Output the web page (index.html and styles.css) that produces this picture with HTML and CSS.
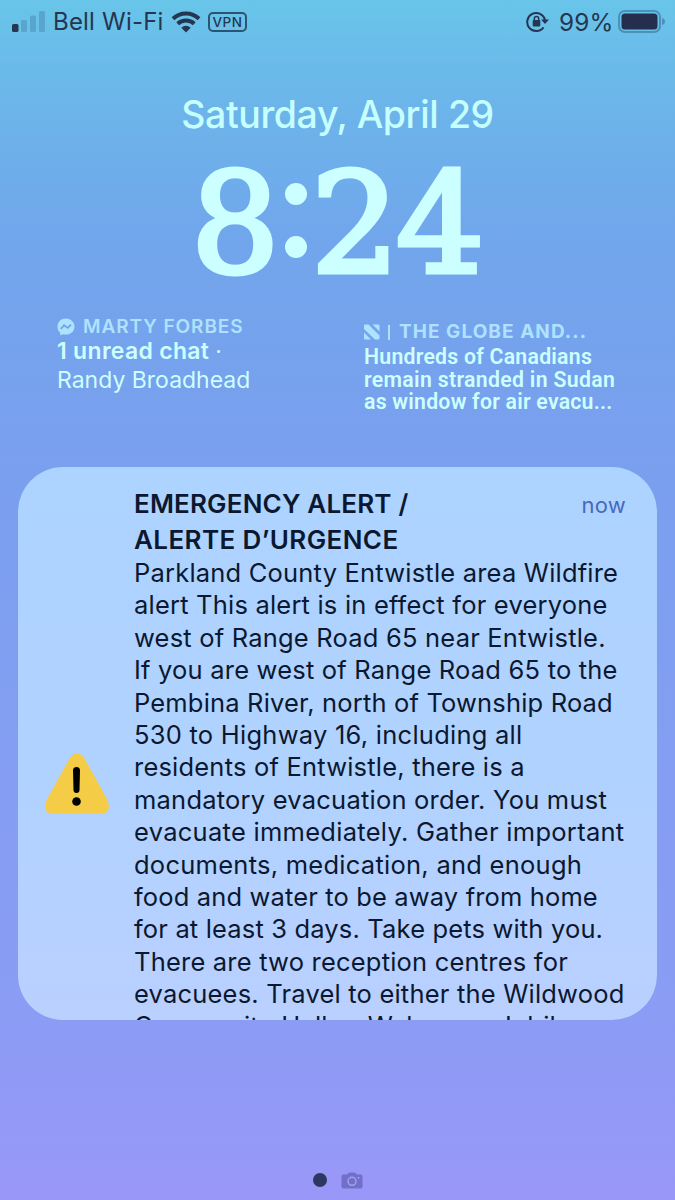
FILE: index.html
```
<!DOCTYPE html>
<html lang="en">
<head>
<meta charset="utf-8">
<title>Lock screen</title>
<link rel="stylesheet" href="styles.css">
</head>
<body>
<main class="screen">
  <header class="status">
    <svg class="signal" width="34" height="21" viewBox="0 0 34 21"><rect x="0" y="13" width="6.5" height="8" rx="1.6" fill="#253650"/><g fill="#58a5cd"><rect x="9" y="9" width="6" height="12" rx="1.6"/><rect x="18" y="4.5" width="6" height="16.5" rx="1.6"/><rect x="27" y="0" width="6" height="21" rx="1.6"/></g></svg>
    <span class="carrier">Bell Wi-Fi</span>
    <svg class="wifi" width="30" height="22" viewBox="0 0 30 22" fill="none" stroke="#253650" stroke-width="4"><path d="M2 7.700C9.200.700 20.800.700 28 7.700"/><path d="M6.700 12.700C11.300 8.400 18.700 8.400 23.300 12.700"/><path d="M15 21.500 10.300 16.700Q15 12.700 19.700 16.700Z" fill="#253650" stroke="none"/></svg>
    <span class="vpn">VPN</span>
    <span class="spacer"></span>
    <svg class="lock" width="23" height="22" viewBox="0 0 23 22" fill="none" stroke="#253650" stroke-width="2"><path d="M17.500 16.300A9 9 0 1 1 19 9"/><path d="M15 8.500H23L19 13Z" fill="#253650" stroke="none"/><rect x="6.700" y="9" width="7.600" height="6.500" rx="1" fill="#253650" stroke="none"/><path d="M8.300 9V7.700a2.200 2.200 0 0 1 4.400 0V9" stroke-width="1.500"/></svg>
    <span class="percent">99%</span>
    <svg class="battery" width="47" height="24" viewBox="0 0 47 24"><rect x="1" y="1" width="41" height="21" rx="6" fill="none" stroke="#4b90b8" stroke-width="2"/><rect x="3.500" y="3.500" width="36" height="16" rx="3.500" fill="#252f4d"/><path d="M44 8q3 1 3 3.500t-3 3.500z" fill="#4b90b8"/></svg>
  </header>

  <div class="date">Saturday, April 29</div>
  <div class="time"><span class="eight">8</span><span class="colon"><i></i><i></i></span><span class="two">2</span><span class="four">4</span></div>

  <section class="widgets">
    <article class="widget chat">
      <div class="label"><svg width="18" height="18" viewBox="0 0 18 18"><path d="M9 .5C4 .5.500 4 .500 8.700c0 2.500 1 4.600 2.700 6v2.800l2.700-1.300c1 .3 2 .4 3.100.4 5 0 8.500-3.500 8.500-7.900S14 .500 9 .500Z" fill="#aee2ff"/><path d="m3.800 11 3.300-3.800 3.600 2.700L14 6.700" fill="none" stroke="#74a2ed" stroke-width="1.800"/></svg><span class="name">MARTY FORBES</span></div>
      <div class="strong">1 unread chat <span class="sep">·</span></div>
      <div class="plain">Randy Broadhead</div>
    </article>
    <article class="widget news">
      <div class="label"><svg width="16" height="16" viewBox="0 0 16 16" fill="#aee2ff"><path d="M0 1.500Q0 .5 1 .5H4.500L15.500 11.500V14.500Q15.500 15.500 14.500 15.500H11L0 5Z"/><path d="M8.500.5H14.500Q15.500.5 15.500 1.500V7.500Z"/><path d="M0 8.500 7 15.500H1Q0 15.500 0 14.500Z"/></svg><i class="bar"></i><span class="paper">THE GLOBE AND...</span></div>
      <div class="head h1">Hundreds of Canadians</div>
      <div class="head h2">remain stranded in Sudan</div>
      <div class="head h3">as window for air evacu...</div>
    </article>
  </section>

  <section class="alert">
    <svg class="warning" width="66" height="62" viewBox="0 0 66 62"><path d="M25.500 5.500Q33-5 40.500 5.500L63.500 47Q68 60.500 57 60.500H9Q-2 60.500 2.500 47Z" fill="#f4cc46"/><path d="M29 17.500a3.500 3.500 0 0 1 7 0L35.500 37a2.900 2.900 0 0 1-6 0Z"/><circle cx="32.500" cy="48.500" r="4.300"/></svg>
    <div class="message">
      <div class="top"><h1><span class="t1">EMERGENCY ALERT /</span><br><span class="t2">ALERTE D’URGENCE</span></h1><span class="now">now</span></div>
      <div class="body">
        <p class="l1">Parkland County Entwistle area Wildfire</p>
        <p class="l2">alert This alert is in effect for everyone</p>
        <p class="l3">west of Range Road 65 near Entwistle.</p>
        <p class="l4">If you are west of Range Road 65 to the</p>
        <p class="l5">Pembina River, north of Township Road</p>
        <p class="l6">530 to Highway 16, including all</p>
        <p class="l7">residents of Entwistle, there is a</p>
        <p class="l8">mandatory evacuation order. You must</p>
        <p class="l9">evacuate immediately. Gather important</p>
        <p class="l10">documents, medication, and enough</p>
        <p class="l11">food and water to be away from home</p>
        <p class="l12">for at least 3 days. Take pets with you.</p>
        <p class="l13">There are two reception centres for</p>
        <p class="l14">evacuees. Travel to either the Wildwood</p>
        <p class="l15">Community Hall or Wabamun Jubilee</p>
      </div>
    </div>
  </section>

  <footer class="pager"><i class="dot"></i><svg width="22" height="17" viewBox="0 0 22 17"><path d="M2.500 2.500H6L8 .5H14L16 2.500H19.500Q21.500 2.500 21.500 4.500V14.500Q21.500 16.500 19.500 16.500H2.500Q.5 16.500.5 14.500V4.500Q.5 2.500 2.500 2.500Z" fill="#716fc6"/><circle cx="11" cy="9.300" r="4" fill="none" stroke="#a29ef8" stroke-width="1.500"/><circle cx="17.500" cy="5.700" r="1" fill="#a29ef8"/></svg></footer>
</main>
</body>
</html>
```
FILE: styles.css
```
* { box-sizing: border-box; }
body { margin: 0; font-family: Inter, "Liberation Sans", sans-serif; }
h1, p { margin: 0; font: inherit; }
.screen {
  width: 675px; height: 1200px; overflow: hidden;
  display: flex; flex-direction: column;
  background: linear-gradient(#68c5e9 0, #6cb4ea 110px, #71a6ec 240px, #76a2ed 350px, #7a9fef 480px, #839ef2 740px, #8b9cf5 1020px, #9a97f8 1200px);
}
.screen svg { display: block; flex: none; }
.status { height: 44px; flex: none; display: flex; align-items: center; padding: 0 10px 1px 12px; color: #253650; white-space: nowrap; }
.carrier { width: 112px; margin-left: 7px; font-size: 24px; letter-spacing: .2px; }
.carrier + .wifi { margin-left: 6px; }
.vpn { width: 39px; height: 20px; margin-left: 7px; border: 2px solid #2c5372; border-radius: 5px; font-size: 13.5px; line-height: 16px; font-weight: 500; text-align: center; letter-spacing: .5px; }
.spacer { flex: 1; }
.percent { width: 53px; margin: 0 6px 0 10px; font-size: 24.3px; letter-spacing: .2px; }
.date { flex: none; height: 48px; margin: 47px 0 0; text-align: center; color: #c5ffff; font-size: 37.5px; font-weight: 500; line-height: 48px; letter-spacing: -.4px; }
.time { flex: none; display: flex; height: 148px; margin: 10px 0 0 191px; color: #ccffff; font: 139px/150px "DejaVu Serif", serif; -webkit-text-stroke: 5px #ccffff; }
.eight { width: 93px; }
.colon { width: 27px; display: flex; flex-direction: column; gap: 31px; padding: 34px 0 0 1px; }
.colon i { width: 22px; height: 22px; border-radius: 50%; background: #ccffff; }
.two { width: 85px; }
.four { width: 88px; }
.widgets { flex: none; display: flex; height: 170px; color: #ccffff; white-space: nowrap; }
.widget { padding-left: 57px; width: 364px; }
.chat { padding-top: 20px; }
.news { width: 311px; padding: 25px 0 0; }
.label { display: flex; align-items: center; height: 20px; color: #aee2ff; font-size: 19px; font-weight: 600; line-height: 20px; }
.name { margin-left: 8px; letter-spacing: .93px; }
.strong { font-size: 23px; font-weight: 600; line-height: 29px; letter-spacing: .3px; }
.sep { font-weight: 400; }
.plain { font-size: 23px; line-height: 28px; }
.bar { width: 2px; height: 15px; margin: 0 9px 0 8px; background: #aee2ff; }
.paper { font-weight: 700; letter-spacing: 1.05px; }
.head { font: 600 21.3px/22.5px Roboto, sans-serif; letter-spacing: .22px; }
.h1 { margin-top: 4px; }
.h2 { letter-spacing: .3px; }
.alert { flex: none; width: 639px; height: 553px; margin: 0 0 0 18px; border-radius: 45px; overflow: hidden; display: flex; background: linear-gradient(#add3ff, #b1d2ff 60%, #bad0ff); }
.warning { margin: 286px 0 0 26px; }
.message { width: 492px; margin-left: 24px; padding-top: 19px; color: #0b1830; white-space: nowrap; }
.top { display: flex; justify-content: space-between; height: 71px; }
.top h1 { font-size: 26px; font-weight: 600; line-height: 36px; }
.t1 { letter-spacing: .17px; }
.t2 { letter-spacing: .4px; }
.now { color: #4669bd; font-size: 22px; line-height: 39px; letter-spacing: .2px; }
.body { font-size: 25.5px; line-height: 32.4px; letter-spacing: .2px; }
.body p { height: 32.4px; }
.l5 { letter-spacing: .17px; }
.l6 { letter-spacing: .25px; }
.l8 { letter-spacing: .22px; }
.l9 { letter-spacing: .28px; }
.l10 { letter-spacing: .26px; }
.l11 { letter-spacing: .14px; }
.l12 { letter-spacing: .16px; }
.pager { display: flex; align-items: center; gap: 14px; margin: 151px 0 0 313px; height: 18px; }
.dot { width: 14px; height: 14px; border-radius: 50%; background: #2d3860; }
```
